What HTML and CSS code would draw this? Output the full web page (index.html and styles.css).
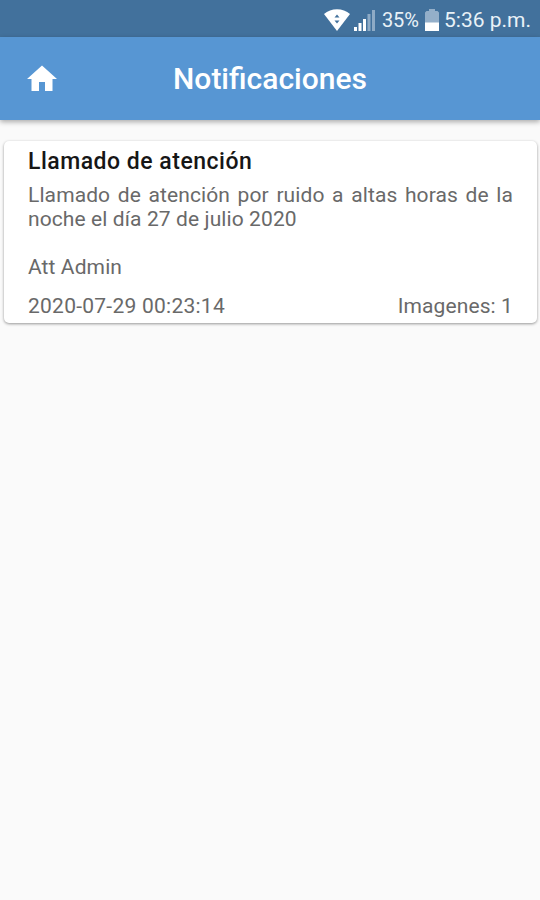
FILE: index.html
```html
<!DOCTYPE html>
<html lang="es">
<head>
  <meta charset="UTF-8">
  <title>Notificaciones</title>
  <link rel="stylesheet" href="styles.css">
</head>
<body>
  <div class="status-bar">
    <svg class="wifi-icon" viewBox="0 0 26 22">
      <path fill="#fff" d="M0 5C7-1.3 19-1.3 26 5L13 22z"></path>
      <path fill="#42719c" d="M10.5 8.5l2.5-3 2.5 3zM10.5 11.5h5l-2.500 3z"></path>
    </svg>
    <svg class="signal-icon" viewBox="0 0 22 22">
      <path fill="#fff" d="M0 18h3v4H0zM4.5 14h3v8h-3zM9 10h3v12H9z"></path>
      <path fill="#8eabc6" d="M13.5 5h3v17h-3zM18 1h3v21h-3z"></path>
    </svg>
    <span class="battery-level">35%</span>
    <svg class="battery-icon" viewBox="0 0 14 22">
      <path fill="#94afc9" d="M4 0h6v2h2.5L14 3.5V14H0V3.5L1.5 2H4z"></path>
      <path fill="#fff" d="M0 13.5h14V22H0z"></path>
    </svg>
    <span class="clock">5:36 p.m.</span>
  </div>

  <header class="app-bar">
    <a href="#" class="home-btn" aria-label="Inicio">
      <svg class="icon" viewBox="0 0 24 24" fill="currentColor">
        <path d="M10 20v-6h4v6h5v-8h3L12 3 2 12h3v8z"></path>
      </svg>
    </a>
    <h1 class="app-title">Notificaciones</h1>
  </header>

  <main class="notifications">
    <article class="card">
      <h2 class="card-title">Llamado de atención</h2>
      <p class="card-body">Llamado de atención por ruido a altas horas de la noche el día 27 de julio 2020</p>
      <p class="card-sign">Att Admin</p>
      <div class="card-footer">
        <span class="card-date">2020-07-29 00:23:14</span>
        <span>Imagenes: 1</span>
      </div>
    </article>
  </main>
</body>
</html>
```
FILE: styles.css
```css
* {
  margin: 0;
  padding: 0;
  box-sizing: border-box;
}

body {
  font-family: Roboto, 'Liberation Sans', sans-serif;
  background: #fafafa;
  min-height: 100vh;
}

.status-bar {
  height: 37px;
  padding: 2px 9px 0 0;
  background: #42719c;
  color: #e9f1f7;
  display: flex;
  align-items: center;
  justify-content: flex-end;
}

.wifi-icon {
  width: 26px;
  height: 22px;
  margin-right: 4px;
}

.signal-icon {
  width: 22px;
  height: 22px;
  margin-right: 6px;
}

.battery-level {
  font-size: 20px;
  margin-right: 6px;
}

.battery-icon {
  width: 14px;
  height: 22px;
  margin-right: 5px;
}

.clock {
  font-size: 21px;
}

.app-bar {
  height: 83px;
  padding: 0 24px;
  background: #5796d3;
  color: #fff;
  display: grid;
  grid-template-columns: 36px 1fr 36px;
  align-items: center;
  box-shadow: 0 2px 5px rgba(0, 0, 0, 0.32);
}

.home-btn {
  color: inherit;
  display: flex;
}

.icon {
  width: 36px;
  height: 36px;
}

.app-title {
  font-size: 30px;
  font-weight: 500;
  text-align: center;
}

.notifications {
  padding: 21px 3px 0 4px;
}

.card {
  height: 182px;
  padding: 8px 24px 0;
  background: #fff;
  border-radius: 5px;
  box-shadow: 0 1px 3px rgba(0, 0, 0, 0.4);
  color: #696969;
  font-size: 21px;
  line-height: 24px;
  letter-spacing: 0.1px;
}

.card-title {
  color: #161616;
  font-size: 23px;
  font-weight: 500;
  line-height: 26px;
  letter-spacing: 0.5px;
}

.card-body {
  margin-top: 8px;
  text-align: justify;
}

.card-sign {
  margin-top: 24px;
}

.card-footer {
  margin-top: 15px;
  display: flex;
  justify-content: space-between;
}

.card-date {
  letter-spacing: 0.25px;
}
```
